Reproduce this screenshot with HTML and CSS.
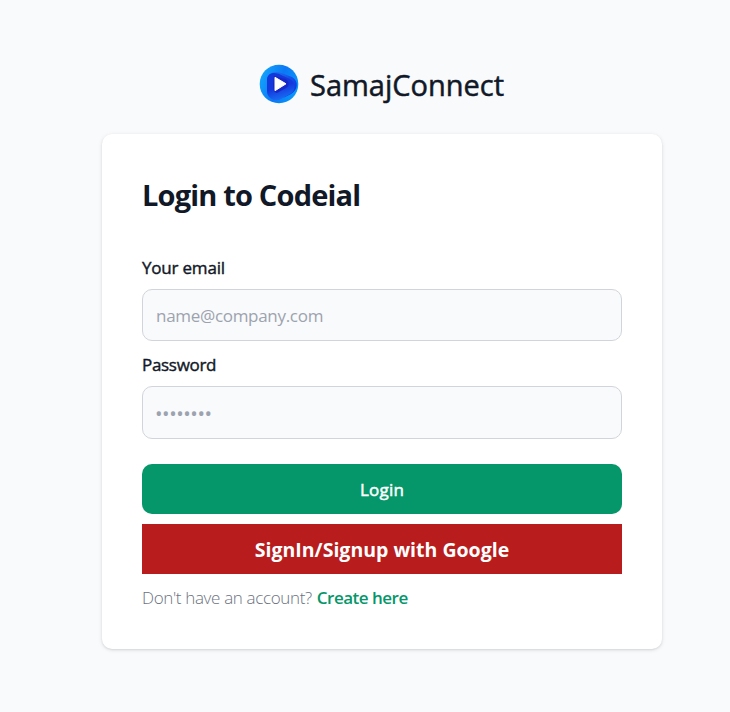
FILE: index.html
```html
<!DOCTYPE html>
<html lang="en">
<head>
<meta charset="utf-8">
<title>SamajConnect</title>
<link rel="stylesheet" href="styles.css">
</head>
<body>
<main class="page">
  <a class="brand">
    <svg class="logo" viewBox="0 0 40 40" aria-hidden="true">
      <defs>
        <linearGradient id="disc" x1="0" y1="0.3" x2="1" y2="0.7"><stop offset="0" stop-color="#12a5fb"/><stop offset="0.5" stop-color="#0b78f5"/><stop offset="1" stop-color="#089afa"/></linearGradient>
        <linearGradient id="band" x1="0" y1="0" x2="1" y2="0.6"><stop offset="0" stop-color="#1a80f4"/><stop offset="1" stop-color="#1238e0"/></linearGradient>
        <linearGradient id="fold" x1="0" y1="0" x2="0.3" y2="1"><stop offset="0" stop-color="#1238dc"/><stop offset="0.6" stop-color="#1438dc"/><stop offset="1" stop-color="#1868f2"/></linearGradient>
      </defs>
      <circle cx="20" cy="20" r="19.3" fill="url(#disc)"/>
      <path d="M8 14C10 8 17 7 22 9L33 13C40 17 39 26 32 30L24 34C30 29 34 22 29 17L22 13C16 10 9 12 8 19Z" fill="url(#band)"/>
      <path d="M8 15C9 8 17 8 22 11L31 15C37 19 37 27 31 30L20 36C13 37 8 33 8 27Z" fill="url(#fold)"/>
      <path d="M15 12L27 15C31 18 30 22 27 24L18 29C15 29 14 25 14 20Z" fill="#1828c8"/>
      <path d="M16 13.3L27 19.8L16 26.7Z" fill="#fff" stroke="#fff" stroke-linejoin="round"/>
    </svg>
    <span class="brand-name">SamajConnect</span>
  </a>
  <section class="card">
    <h1 class="title">Login to Codeial</h1>
    <form class="form">
      <label class="label label-email" for="email">Your email</label>
      <input class="input" type="email" id="email" placeholder="name@company.com">
      <label class="label label-password" for="password">Password</label>
      <input class="input input-password" type="password" id="password" placeholder="••••••••">
      <button class="login" type="button">Login</button>
      <a class="google">SignIn/Signup with Google</a>
      <p class="signup"><span class="question">Don't have an account?</span> <a class="create">Create here</a></p>
    </form>
  </section>
</main>
</body>
</html>
```
FILE: styles.css
```css
* { box-sizing: border-box; }
body {
  margin: 0;
  background: #f9fafb;
  color: #111827;
  font-family: "Open Sans", "Noto Sans", sans-serif;
  font-size: 17px;
}
.page {
  display: flex;
  flex-direction: column;
  align-items: center;
  min-height: 712px;
  margin-left: 34px;
  padding-top: 64px;
}
.brand {
  display: flex;
  align-items: center;
  gap: 11px;
  height: 40px;
  margin-bottom: 30px;
}
.logo { width: 40px; height: 40px; }
.brand-name {
  width: 195px;
  padding-top: 1px;
  font-size: 29px;
  line-height: 40px;
  white-space: nowrap;
  -webkit-text-stroke: .5px;
}
.card {
  width: 560px;
  height: 515px;
  padding: 40px;
  background: #fff;
  border-radius: 10px;
  box-shadow: 0 1px 4px rgba(0, 0, 0, .1), 0 1px 2px rgba(0, 0, 0, .08);
}
.title {
  margin: 0 0 30px;
  font-size: 29px;
  font-weight: 700;
  line-height: 42px;
  letter-spacing: -.82px;
}
.form { display: flex; flex-direction: column; align-items: stretch; }
.label {
  align-self: flex-start;
  line-height: 25px;
  letter-spacing: -.2px;
  white-space: nowrap;
  -webkit-text-stroke: .4px;
}
.label-email { margin: 9px 0 9px; }
.label-password { margin: 11px 0 9px; letter-spacing: -.3px; }
.input {
  width: 100%;
  height: 52px;
  margin: 0;
  padding: 0 13px;
  border: 1px solid #d1d5db;
  border-radius: 10px;
  background: #f9fafb;
  font: inherit;
}
.input::placeholder { color: #9ca3af; opacity: 1; letter-spacing: -.3px; }
.input-password { height: 53px; padding: 3px 12px 0; }
.input-password::placeholder { font-size: 20px; letter-spacing: -.45px; }
.login {
  height: 50px;
  margin: 25px 0 10px;
  padding: 0;
  border: 0;
  border-radius: 10px;
  background: #059669;
  color: #fff;
  font: inherit;
  letter-spacing: .2px;
  -webkit-text-stroke: .5px;
}
.google {
  height: 50px;
  background: #b91c1c;
  color: #fff;
  font-size: 19.5px;
  font-weight: 700;
  line-height: 52px;
  letter-spacing: 0;
  text-align: center;
}
.signup { display: flex; gap: 5px; margin: 11px 0 0; line-height: 25px; white-space: nowrap; }
.question { color: #6b7280; font-weight: 300; letter-spacing: -.35px; }
.create { color: #059669; font-weight: 600; letter-spacing: -.5px; }
```
